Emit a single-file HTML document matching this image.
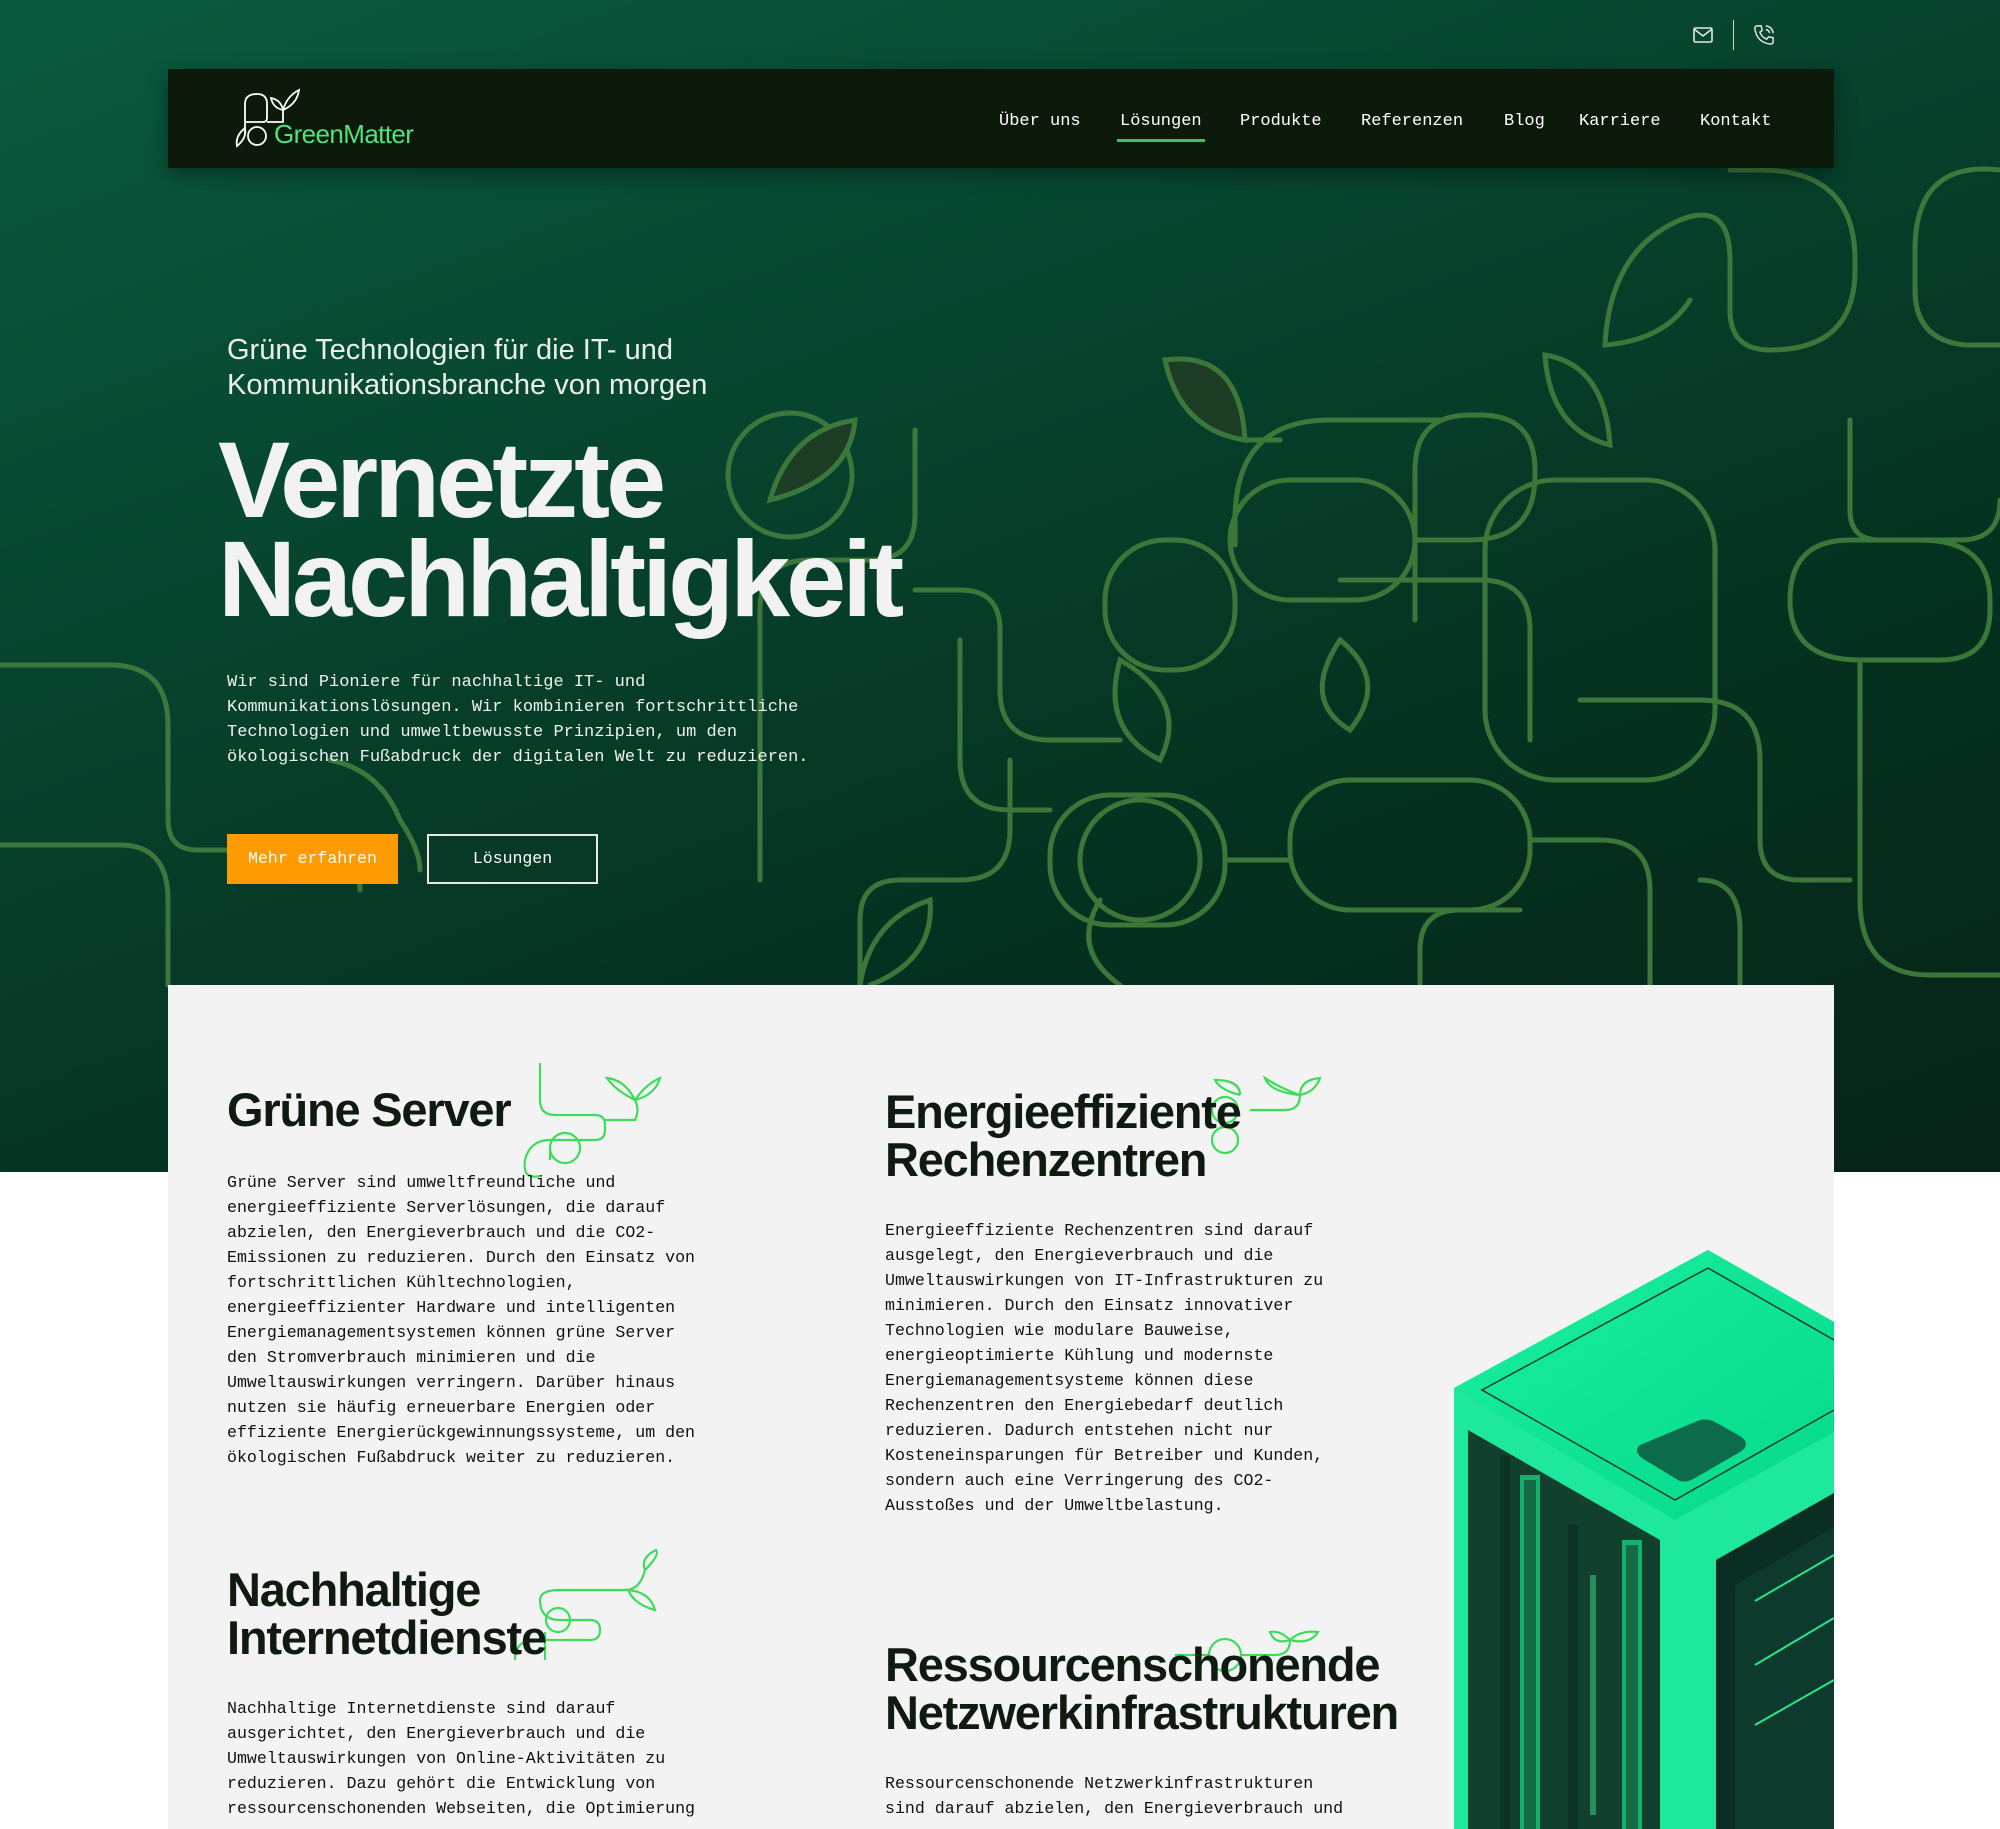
<!DOCTYPE html>
<html><head><meta charset="utf-8">
<style>
*{margin:0;padding:0;box-sizing:border-box}
body{width:2000px;height:1829px;overflow:hidden;background:#fff;font-family:"Liberation Sans",sans-serif;position:relative}
.hero{position:absolute;left:0;top:0;width:2000px;height:1172px;background:linear-gradient(160deg,#0a5a3f 0%,#07452f 35%,#05301f 70%,#062417 100%)}
.mono{font-family:"Liberation Mono",monospace}
.nav{position:absolute;left:168px;top:69px;width:1666px;height:99px;background:#0d1a0b;box-shadow:0 8px 20px rgba(0,0,0,.35)}
.nav a{position:absolute;top:43px;color:#fff;font-size:17px;text-decoration:none;font-family:"Liberation Mono",monospace}
.panel{position:absolute;left:168px;top:985px;width:1666px;height:844px;background:#f3f3f3}
.abs{position:absolute}
h2{position:absolute;font-weight:700;font-size:47px;line-height:48px;color:#0f1a10;letter-spacing:-1.2px}
.p{position:absolute;font-family:"Liberation Mono",monospace;font-size:16.6px;line-height:25px;color:#111}
</style></head><body>
<div class="hero"></div>
<svg class="abs" style="left:0;top:0" width="2000" height="1172" viewBox="0 0 2000 1172" fill="none" stroke="#3f7b3c" stroke-width="5" stroke-linecap="round">
 <g opacity="0.95">
 <path d="M0 665 H110 Q168 665 168 725 V820 Q168 850 198 850 H320 Q360 850 360 890"/>
 <path d="M0 845 H120 Q168 845 168 900 V985"/>
 <path d="M330 760 Q380 770 400 820 Q420 850 420 870"/>
 <path d="M760 880 V610 Q760 560 810 560 H870 Q915 560 915 515 V430"/>
 <circle cx="790" cy="475" r="62"/>
 <path d="M770 500 Q790 430 855 420 Q850 480 770 500Z" fill="#1f3d25"/>
 <path d="M915 590 H960 Q1000 590 1000 630 V690 Q1000 740 1050 740 H1120"/>
 <path d="M860 985 V920 Q860 880 900 880 H960 Q1010 880 1010 830 V760"/>
 <rect x="1105" y="540" width="130" height="130" rx="60"/>
 <rect x="1230" y="480" width="185" height="120" rx="60"/>
 <path d="M1415 540 H1470 Q1535 540 1535 475 V470 Q1535 415 1480 415 H1470 Q1415 415 1415 470 V620"/>
 <path d="M1165 360 Q1240 350 1245 440 Q1180 430 1165 360Z" fill="#1f3d25"/>
 <path d="M1245 440 H1280"/>
 <path d="M1340 580 H1480 Q1530 580 1530 630 V740"/>
 <rect x="1485" y="480" width="230" height="300" rx="70"/>
 <path d="M1730 170 Q1730 170 1760 170 Q1855 170 1855 260 V270 Q1855 350 1770 350 Q1730 350 1730 310 V260 Q1730 200 1680 220 Q1610 250 1605 345 Q1665 340 1690 300"/>
 <path d="M1545 355 Q1605 365 1610 445 Q1550 430 1545 355Z"/>
 <path d="M1850 420 V510 Q1850 540 1880 540 H1960 Q2000 540 2000 500"/>
 <path d="M2000 170 Q1915 160 1915 250 V290 Q1915 340 1965 345 H2000"/>
 <path d="M1790 600 Q1790 540 1850 540 H1920 Q1990 540 1990 600 V610 Q1990 660 1940 660 H1860 Q1790 660 1790 600Z"/>
 <path d="M1860 660 V900 Q1860 975 1930 975 H2000"/>
 <path d="M1580 700 H1700 Q1760 700 1760 760 V840 Q1760 880 1800 880 H1850"/>
 <rect x="1050" y="795" width="175" height="130" rx="60"/>
 <rect x="1290" y="780" width="240" height="130" rx="60"/>
 <path d="M1225 860 H1290"/>
 <path d="M1530 840 H1600 Q1650 840 1650 890 V985"/>
 <path d="M1120 660 Q1190 700 1160 760 Q1100 730 1120 660Z"/>
 <path d="M1340 640 Q1390 680 1350 730 Q1300 700 1340 640Z"/>
 <path d="M1100 900 Q1070 950 1120 985"/>
 <path d="M860 985 Q870 920 930 900 Q935 960 870 985"/>
 <path d="M1420 985 V950 Q1420 910 1460 910 H1520"/>
 <path d="M1740 985 V930 Q1740 880 1700 880"/>
 <path d="M960 640 V760 Q960 810 1010 810 H1050"/>
 <path d="M1235 545 V520 Q1235 420 1330 420 H1440"/>
 <circle cx="1140" cy="860" r="60"/>
 </g>
</svg>
<div class="abs" style="left:1733px;top:20px;width:1px;height:30px;background:#cfd8d3"></div>
<svg class="abs" style="left:1693px;top:27px" width="20" height="16" viewBox="0 0 20 16" fill="none" stroke="#e6e6e6" stroke-width="1.6"><rect x="1" y="1" width="18" height="14" rx="1.5"/><path d="M1 2 L10 9 L19 2"/></svg>
<svg class="abs" style="left:1753px;top:24px" width="22" height="22" viewBox="0 0 24 24" fill="none" stroke="#e6e6e6" stroke-width="1.6"><path d="M5 2 L9 2 L10 7 L7.5 9 Q10 15 15 16.5 L17 14 L22 15 L22 19 Q22 22 19 22 Q4 20 2 5 Q2 2 5 2Z"/><path d="M14 2 Q21 3 22 10 M14 6 Q18 7 18 10"/></svg>
<div class="nav">
 <svg class="abs" style="left:58px;top:19px" width="94" height="60" viewBox="0 0 80 60" fill="none" stroke="#fff" stroke-width="1.8"><path d="M4 58 Q2 48 12 40 Q14 50 4 58Z"/><path d="M12 45 V16 Q12 6 24 6 Q34 6 34 16 V30 Q34 34 30 34 H12"/><circle cx="24" cy="48" r="9"/><path d="M34 34 H50 V22"/><path d="M50 22 Q40 20 38 10 Q48 12 50 22 Q54 8 66 2 Q64 16 50 22"/></svg>
 <div class="abs" style="left:106px;top:50px;color:#4fe37a;font-size:26px;letter-spacing:-0.6px">GreenMatter</div>
 <a style="left:831px">Über uns</a>
 <a style="left:952px">Lösungen</a>
 <div class="abs" style="left:949px;top:70px;width:88px;height:3px;background:#3ec25d"></div>
 <a style="left:1072px">Produkte</a>
 <a style="left:1193px">Referenzen</a>
 <a style="left:1336px">Blog</a>
 <a style="left:1411px">Karriere</a>
 <a style="left:1532px">Kontakt</a>
</div>
<div class="abs" style="left:227px;top:333px;color:#e9efe9;font-size:29px;line-height:35px;font-weight:300">Grüne Technologien für die IT- und<br>Kommunikationsbranche von morgen</div>
<div class="abs" style="left:218px;top:430px;color:#f2f2f2;font-size:108px;line-height:99px;font-weight:700;letter-spacing:-4px">Vernetzte<br>Nachhaltigkeit</div>
<div class="abs mono" style="left:227px;top:670px;color:#f0f0f0;font-size:17px;line-height:25px">Wir sind Pioniere für nachhaltige IT- und<br>Kommunikationslösungen. Wir kombinieren fortschrittliche<br>Technologien und umweltbewusste Prinzipien, um den<br>ökologischen Fußabdruck der digitalen Welt zu reduzieren.</div>
<div class="abs mono" style="left:227px;top:834px;width:171px;height:50px;background:#ff9a00;color:#fff;font-size:16.5px;line-height:50px;text-align:center">Mehr erfahren</div>
<div class="abs mono" style="left:427px;top:834px;width:171px;height:50px;border:2px solid #e8e8e8;color:#fff;font-size:16.5px;line-height:46px;text-align:center">Lösungen</div>

<div class="panel"></div>
<svg class="abs" style="left:0;top:1050px" width="2000" height="700" viewBox="0 1050 2000 700" fill="none" stroke="#3ddc5a" stroke-width="2.2">
 <path d="M540 1063 V1100 Q540 1115 555 1115 H595 Q605 1115 605 1125 V1130 Q605 1140 595 1140 H550 Q530 1140 525 1160 Q522 1180 540 1176"/>
 <circle cx="565" cy="1148" r="15"/><path d="M550 1148 V1160"/>
 <path d="M605 1120 H635 Q640 1110 635 1100"/>
 <path d="M635 1100 Q615 1090 607 1078 Q625 1080 635 1100 Q645 1085 660 1078 Q655 1095 635 1100"/>
 <path d="M1240 1095 Q1240 1080 1215 1080 Q1220 1090 1240 1095 M1250 1110 H1285 Q1300 1110 1300 1095 Q1300 1080 1320 1078 Q1315 1092 1300 1095 Q1280 1088 1265 1078 Q1270 1092 1300 1095"/>
 <circle cx="1225" cy="1140" r="13"/><circle cx="1225" cy="1110" r="13"/>
 <path d="M515 1660 Q515 1640 535 1640 H590 Q600 1640 600 1630 Q600 1620 590 1620 H560 Q540 1620 540 1600 Q540 1590 560 1590 H625 Q640 1590 645 1570"/>
 <path d="M645 1570 Q660 1555 656 1550 Q640 1558 645 1570 M628 1590 Q650 1592 655 1610 Q635 1605 628 1590"/>
 <circle cx="558" cy="1620" r="12"/><path d="M545 1632 V1660"/>
 <circle cx="1225" cy="1655" r="16"/>
 <path d="M1175 1655 H1209 M1241 1655 H1275 Q1290 1655 1290 1640 Q1280 1630 1270 1632 Q1275 1645 1290 1640 Q1300 1630 1318 1632 Q1310 1645 1290 1640"/>
</svg>
<h2 style="left:227px;top:1086px">Grüne Server</h2>
<div class="p" style="left:227px;top:1170px">Grüne Server sind umweltfreundliche und<br>energieeffiziente Serverlösungen, die darauf<br>abzielen, den Energieverbrauch und die CO2-<br>Emissionen zu reduzieren. Durch den Einsatz von<br>fortschrittlichen Kühltechnologien,<br>energieeffizienter Hardware und intelligenten<br>Energiemanagementsystemen können grüne Server<br>den Stromverbrauch minimieren und die<br>Umweltauswirkungen verringern. Darüber hinaus<br>nutzen sie häufig erneuerbare Energien oder<br>effiziente Energierückgewinnungssysteme, um den<br>ökologischen Fußabdruck weiter zu reduzieren.</div>
<h2 style="left:885px;top:1088px">Energieeffiziente<br>Rechenzentren</h2>
<div class="p" style="left:885px;top:1218px">Energieeffiziente Rechenzentren sind darauf<br>ausgelegt, den Energieverbrauch und die<br>Umweltauswirkungen von IT-Infrastrukturen zu<br>minimieren. Durch den Einsatz innovativer<br>Technologien wie modulare Bauweise,<br>energieoptimierte Kühlung und modernste<br>Energiemanagementsysteme können diese<br>Rechenzentren den Energiebedarf deutlich<br>reduzieren. Dadurch entstehen nicht nur<br>Kosteneinsparungen für Betreiber und Kunden,<br>sondern auch eine Verringerung des CO2-<br>Ausstoßes und der Umweltbelastung.</div>
<h2 style="left:227px;top:1566px">Nachhaltige<br>Internetdienste</h2>
<div class="p" style="left:227px;top:1696px">Nachhaltige Internetdienste sind darauf<br>ausgerichtet, den Energieverbrauch und die<br>Umweltauswirkungen von Online-Aktivitäten zu<br>reduzieren. Dazu gehört die Entwicklung von<br>ressourcenschonenden Webseiten, die Optimierung</div>
<h2 style="left:885px;top:1641px">Ressourcenschonende<br>Netzwerkinfrastrukturen</h2>
<div class="p" style="left:885px;top:1771px">Ressourcenschonende Netzwerkinfrastrukturen<br>sind darauf abzielen, den Energieverbrauch und</div>

<svg class="abs" style="left:1440px;top:1240px" width="394" height="589" viewBox="1440 1240 394 589">
 <defs><linearGradient id="tg" x1="0" y1="0" x2="1" y2="1"><stop offset="0" stop-color="#1af0a0"/><stop offset="1" stop-color="#05d88a"/></linearGradient></defs>
 <polygon points="1708,1250 1834,1322 1834,1829 1454,1829 1454,1388" fill="#1ee89c"/>
 <polygon points="1708,1250 1834,1322 1834,1432 1675,1520 1454,1388" fill="url(#tg)"/>
 <path d="M1708 1268 L1834 1340 M1708 1268 L1482 1390 L1675 1500 L1834 1410" fill="none" stroke="#0b3a2a" stroke-width="1.5"/>
 <path d="M1640 1445 Q1632 1452 1645 1460 L1678 1480 Q1685 1484 1695 1478 L1740 1452 Q1752 1444 1740 1436 L1715 1422 Q1705 1417 1695 1422Z" fill="#0b6b4a"/>
 <polygon points="1468,1430 1660,1540 1660,1829 1468,1829" fill="#12402f"/>
 <rect x="1520" y="1475" width="20" height="354" fill="#15c577" opacity="0.85"/>
 <rect x="1524" y="1480" width="12" height="349" fill="#136a45"/>
 <rect x="1622" y="1540" width="20" height="289" fill="#15c577" opacity="0.85"/>
 <rect x="1626" y="1545" width="12" height="284" fill="#136a45"/>
 <rect x="1500" y="1455" width="10" height="374" fill="#0c3325"/>
 <rect x="1568" y="1525" width="10" height="304" fill="#0c3325"/>
 <polygon points="1716,1560 1834,1493 1834,1829 1716,1829" fill="#0a2e24"/>
 <polygon points="1735,1585 1834,1527 1834,1829 1735,1829" fill="#0d3a2c"/>
 <path d="M1755 1601 L1834 1555 M1755 1665 L1834 1618 M1755 1725 L1834 1680" stroke="#2ee38a" stroke-width="2"/>
 <rect x="1590" y="1575" width="6" height="240" fill="#39d98a" opacity="0.5"/>
</svg>
</body></html>
